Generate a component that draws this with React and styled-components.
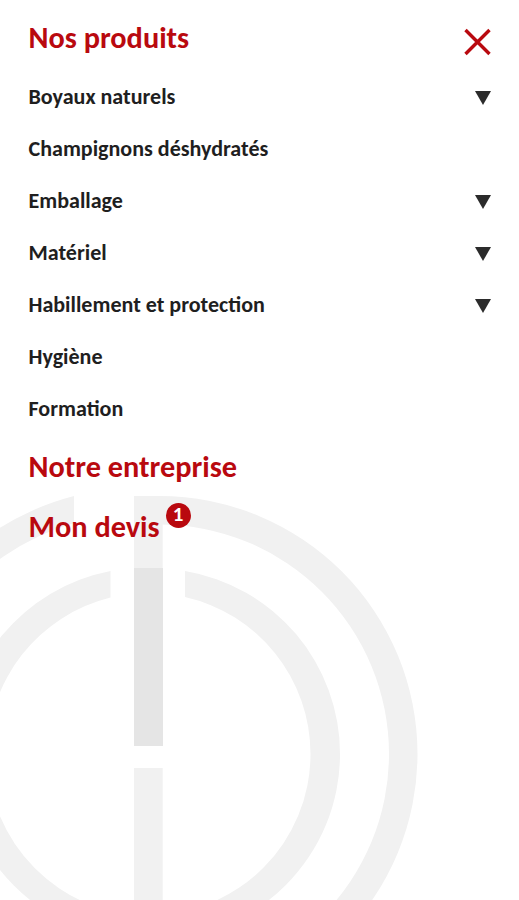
import { useState } from 'react'
import styled, { createGlobalStyle } from "styled-components";

const PRODUCTS = [
  { label: "Boyaux naturels", expandable: true },
  { label: "Champignons déshydratés" },
  { label: "Emballage", expandable: true },
  { label: "Matériel", expandable: true },
  { label: "Habillement et protection", expandable: true },
  { label: "Hygiène" },
  { label: "Formation" },
];

function App() {
  const [quoteCount] = useState(1);

  return (
    <Menu>
      <GlobalStyle />
      <Watermark viewBox="0 490 519 410" aria-hidden="true">
        <path d="M74 496 A266.5 266.5 0 0 0 -125.8 754 H-99.8 A240.5 240.5 0 0 1 74 523 Z" />
        <path d="M134 496 H159.5 A258 258 0 0 1 417.5 754 A258 258 0 0 1 159.5 1012 V983.5 A229.5 229.5 0 0 0 389 754 A229.5 229.5 0 0 0 159.5 524.5 H134 Z" />
        <path d="M110.5 571 A186.4 186.4 0 0 0 -40.5 754 A186.4 186.4 0 0 0 145.9 940.4 L149.2 915.7 A161.7 161.7 0 0 1 -12.5 754 A161.7 161.7 0 0 1 110.5 597.5 Z" />
        <path d="M185 571 A185.5 185.5 0 0 1 340 754 A185.5 185.5 0 0 1 154.5 939.5 L149.5 915 A161 161 0 0 0 310.5 754 A161 161 0 0 0 185 597 Z" />
        <path d="M134 524 H162.7 V568 H134 Z" />
        <path d="M134 768 H162.7 V900 H134 Z" />
        <path d="M134 568 H163 V746 H134 Z" fill="#e5e5e5" />
      </Watermark>
      <Header>
        <Title>Nos produits</Title>
        <CloseButton aria-label="Fermer">
          <svg width="28" height="28" viewBox="0 0 28 28">
            <path d="M2.5 2 L26.5 26 M26.5 2 L2.5 26" stroke="#b9090f" strokeWidth="3.4" />
          </svg>
        </CloseButton>
      </Header>
      <List>
        {PRODUCTS.map((item) => (
          <Row key={item.label}>
            <span>{item.label}</span>
            {item.expandable && <Arrow />}
          </Row>
        ))}
      </List>
      <Title>Notre entreprise</Title>
      <Quote>
        <Title>Mon devis</Title>
        <Badge>{quoteCount}</Badge>
      </Quote>
    </Menu>
  )
}

const GlobalStyle = createGlobalStyle`
  body {
    margin: 0;
    background: #fff;
  }
`

const Menu = styled.nav`
  position: relative;
  box-sizing: border-box;
  height: 900px;
  padding: 8px 28px 0 28.5px;
  overflow: hidden;
  font-family: Carlito, Calibri, Lato, sans-serif;
  font-weight: 700;
`

const Watermark = styled.svg`
  position: absolute;
  left: 0;
  bottom: 0;
  width: 519px;
  height: 410px;
  z-index: -1;
  fill: #f1f1f1;
`

const Header = styled.div`
  display: flex;
  justify-content: space-between;
`

const Title = styled.h2`
  margin: 0;
  font-size: 30.3px;
  line-height: 60px;
  color: #b9090f;
`

const CloseButton = styled.button`
  display: flex;
  align-items: center;
  height: 60px;
  padding: 8px 0 0;
  border: none;
  background: none;
  cursor: pointer;
`

const List = styled.ul`
  margin: 3px 0 2.7px;
  padding: 0;
  list-style: none;
`

const Row = styled.li`
  display: flex;
  justify-content: space-between;
  align-items: center;
  height: 51.9px;
  font-size: 22.05px;
  color: #1f1f1f;
`

const Arrow = styled.i`
  margin-top: 2px;
  border: 8px solid transparent;
  border-top: 14px solid #2b2b2b;
  border-bottom: 0;
`

const Quote = styled.div`
  display: flex;
`

const Badge = styled.span`
  width: 25px;
  height: 25px;
  margin: 6px;
  border-radius: 50%;
  background: #b9090f;
  color: #fff;
  font-size: 21px;
  line-height: 22px;
  text-align: center;
`

export default App
